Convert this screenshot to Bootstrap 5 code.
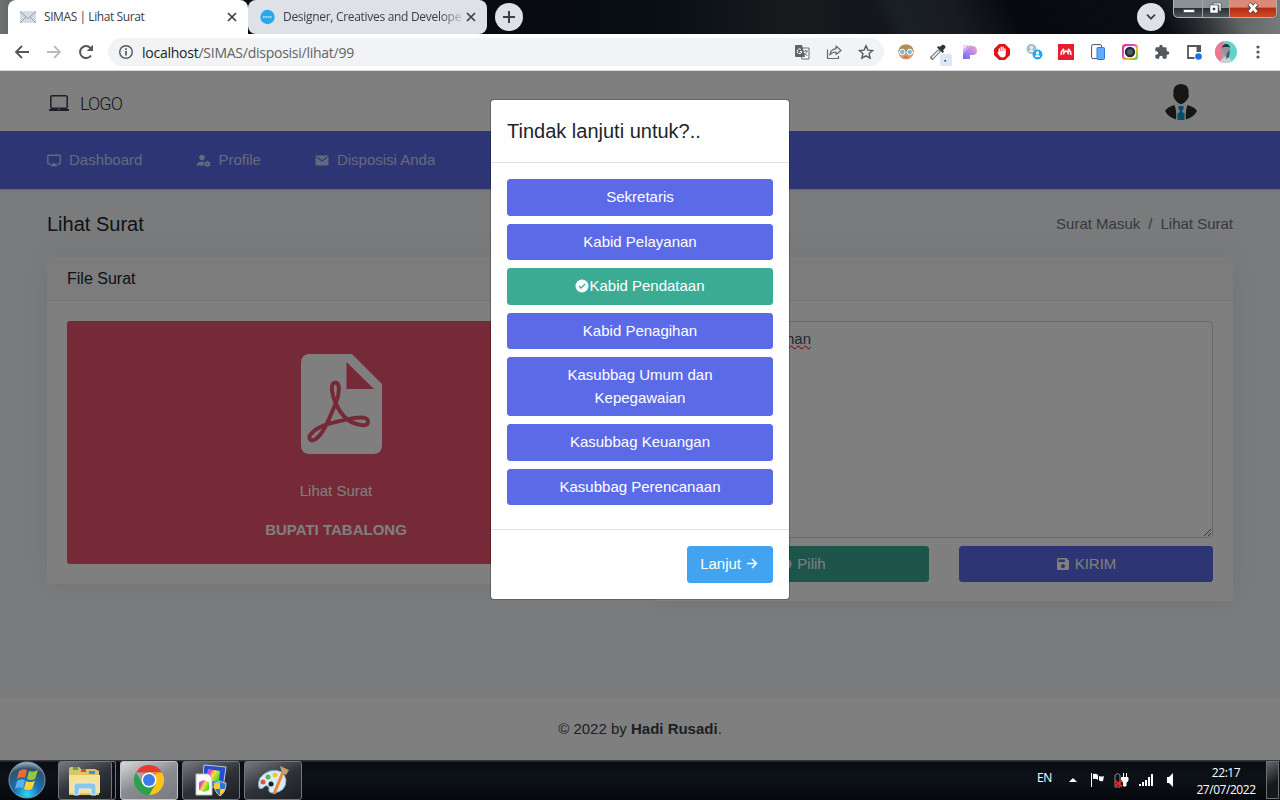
<!DOCTYPE html>
<html lang="id">
<head>
<meta charset="utf-8">
<meta name="viewport" content="width=device-width, initial-scale=1">
<title>SIMAS | Lihat Surat</title>
<link rel="stylesheet" href="https://cdn.jsdelivr.net/npm/bootstrap@5.3.0/dist/css/bootstrap.min.css">
<style>
  body{font-family:"Liberation Sans",Arial,sans-serif;font-size:15px;line-height:1.5;color:#212529;height:100vh;overflow:hidden}
  svg{display:block;flex:none}
  .ui{font-family:"Open Sans","Noto Sans",sans-serif}
  /* browser frame */
  .tabstrip{height:34px;background:linear-gradient(63deg,transparent 68%,#1a1f24 70%,#191d22 74%,#07090f 79%,#0a0e14 90%,transparent 96%),linear-gradient(90deg,#6d7170 0,#30363a 5%,#07090e 20%,#080d12 50%,#171b1e 62%,#080b12 85%,#4e5253 94%,#777a7b 100%);padding-left:8px}
  .btab{width:240px;height:34px;background:#fff;border-radius:8px 8px 0 0;padding:0 11px 0 12px;font-size:12px;color:#3c4043}
  .btab.other{width:239px;background:#dee1e6;border-radius:8px}
  .btab span{letter-spacing:-.42px;white-space:nowrap}
  .btab.other span{letter-spacing:-.3px;-webkit-mask-image:linear-gradient(90deg,#000 88%,rgba(0,0,0,.2) 100%);mask-image:linear-gradient(90deg,#000 88%,rgba(0,0,0,.2) 100%)}
  .round-btn{width:28px;height:28px;border-radius:50%;background:#dee1e6}
  .winctl{height:18px;border:1px solid #aeb2b4;border-top:0;border-radius:0 0 5px 5px;overflow:hidden;background:linear-gradient(#8b9195 45%,#282f34 50%,#4f575c)}
  .winctl div{height:17px;border-right:1px solid #a5a9ab}
  .winctl div:last-child{border:0;background:linear-gradient(#d98a78 40%,#b22d12 50%,#d04a28)}
  .toolbar{height:37px;background:#fff;border-bottom:1px solid #d6d9d8;padding-right:6px}
  .toolbar .cell{width:32px;display:flex;justify-content:center;align-items:center;flex:none}
  .omni{height:28px;border-radius:14px;background:#f1f3f4;width:776px;margin-right:6px;padding-left:10px;padding-right:2px;font-size:14px;color:#5f6368}
  .omni b{font-weight:400;color:#202124}
  /* application */
  .page{height:689px;background:#f3f6f9;overflow:hidden;position:relative}
  .topbar{height:60px;background:#fff;padding:0 83px 0 48px}
  .brandtext{font-family:Roboto,sans-serif;font-size:18px;font-weight:300;letter-spacing:-.9px;color:#2d3045;margin-left:10px}
  .mainnav{height:58px;background:#5b6be8;padding-left:47px;box-shadow:0 1px 1px rgba(0,0,0,.14)}
  .mainnav a{color:#cdd2f8;text-decoration:none;gap:7px}
  .content{padding:0 47px}
  .titlerow{height:68px}
  .titlerow h4{font-size:20px}
  .titlerow .breadcrumb{color:#6c757d;word-spacing:0}
  .panels{display:grid;grid-template-columns:1fr 1fr;gap:30px;align-items:start;height:441px}
  .panel{border:0;border-radius:3px;box-shadow:0 -3px 31px 0 rgba(0,0,0,.05),0 6px 20px 0 rgba(0,0,0,.02)}
  .panel .card-header{height:44px;background:#f9f9f9;border-bottom:1px solid #ededed;padding:0 20px;font-size:16px;display:flex;align-items:center}
  .panel .card-body{padding:20px}
  .pdfbox{height:243px;background:#ec536c;color:#fff;border-radius:3px;padding-top:33px}
  .note{height:217px;border-radius:4px;border-color:#ced4da;font-size:15px;color:#495057;resize:vertical;overflow:auto;padding:6px 12px}
  .note u{text-decoration:underline wavy #f00 1px;text-underline-offset:1px}
  .btn{font-size:15px;line-height:22.5px;border-radius:3px;padding:6px 12px;color:#fff}
  .btn:hover{color:#fff}
  .b-indigo{background:#5b6be8;border-color:#5b6be8}
  .b-green{background:#3cab94;border-color:#3cab94}
  .b-blue{background:#42a4f1;border-color:#42a4f1}
  .pagefoot{height:62px;background:#fff;color:#3a3f46}
  .shade{position:absolute;inset:0;background:rgba(0,0,0,.5);z-index:1040}
  .modal{position:absolute;--bs-modal-margin:28px}
  .modal-content{border-radius:4px;border-color:rgba(0,0,0,.2)}
  .modal-title{font-size:20px;line-height:30px}
  .modal-header,.modal-footer{border-color:#dee2e6}
  /* desktop taskbar */
  .taskbar{height:40px;background:linear-gradient(#32363e 0,#32363e 1px,#0a0d12 2px,#0d1219 50%,#05080b);padding-left:5px;color:#fff}
  .task{width:58px;height:39px;border:1px solid #73777c;border-radius:3px;background:linear-gradient(155deg,#777b7e,#30343a 50%,#1b1f24)}
  .task.active{background:linear-gradient(155deg,#d7d8d9,#8a8d90 50%,#777a7c);border-color:#c2c4c5}
  .stack{width:5px;height:39px;border:1px solid #73777c;border-left:0;border-radius:0 3px 3px 0;margin-left:-1px}
  .tray{font-size:12px;line-height:17px}
  .deskbtn{width:13px;height:38px;border:1px solid #6c7072;background:linear-gradient(150deg,#63676a,#15191c 60%)}
</style>
</head>
<body class="d-flex flex-column">

<div class="tabstrip ui d-flex align-items-center">
  <div class="btab d-flex align-items-center">
    <svg width="16" height="12" viewBox="0 0 16 12"><path d="M0 0h16v12H0z" fill="#d5dde4"/><path d="M0 12 6 6M16 12 10 6M0 .5l8 7 8-7" fill="none" stroke="#8c9aa6" stroke-width=".9"/></svg>
    <span class="ms-2 flex-grow-1">SIMAS | Lihat Surat</span>
    <svg width="10" height="10" viewBox="0 0 10 10" stroke="#3c4043" stroke-width="1.7"><path d="m1 1 8 8M9 1 1 9"/></svg>
  </div>
  <div class="btab other d-flex align-items-center">
    <svg width="15" height="16" viewBox="0 0 15 16"><circle cx="7.5" cy="8" r="7.2" fill="#29a9e8"/><path d="M3 8h9" stroke="#c2e8fa" stroke-width="1.6" stroke-dasharray="1.7 .6"/></svg>
    <span class="ms-2">Designer, Creatives and Develope</span>
    <svg class="ms-auto" width="10" height="10" viewBox="0 0 10 10" stroke="#3c4043" stroke-width="1.7"><path d="m1 1 8 8M9 1 1 9"/></svg>
  </div>
  <div class="round-btn ms-2 d-flex align-items-center justify-content-center"><svg width="12" height="12" stroke="#3c4043" stroke-width="2"><path d="M6 0v12M0 6h12"/></svg></div>
  <div class="round-btn ms-auto me-2 d-flex align-items-center justify-content-center"><svg width="10" height="6" fill="none" stroke="#3c4043" stroke-width="1.8"><path d="m1 .7 4 4 4-4"/></svg></div>
  <div class="winctl d-flex align-self-start" style="margin-right:3px">
    <div style="width:29px"><svg width="28" height="17"><path d="M9.500 9.500h11v3h-11z" fill="#fff" stroke="#454c51" stroke-width=".7"/></svg></div>
    <div style="width:27px"><svg width="26" height="17"><path d="M10 3h8v8h-2V5h-6z" fill="#fff" stroke="#454c51" stroke-width=".6"/><path fill-rule="evenodd" d="M7 5h8v8H7zm3 3v2h2V8z" fill="#fff" stroke="#454c51" stroke-width=".6"/></svg></div>
    <div style="width:46px"><svg width="46" height="17"><path d="m19 4 8 8m0-8-8 8" stroke="#5f3c38" stroke-width="4.600"/><path d="m19.500 4 7 8m0-8-7 8" stroke="#fff" stroke-width="2.800"/></svg></div>
  </div>
</div>

<div class="toolbar ui d-flex align-items-center">
  <div class="cell ms-1 me-0" style="width:36px"><svg width="16" height="14" fill="none" stroke="#54585d" stroke-width="1.800"><path d="M15 7H2M8 1 2 7l6 6"/></svg></div>
  <div class="cell" style="width:28px"><svg width="16" height="14" fill="none" stroke="#babcbe" stroke-width="1.800"><path d="M1 7h13M8 1l6 6-6 6"/></svg></div>
  <div class="cell" style="width:36px"><svg width="16" height="16" viewBox="0 0 16 16"><path d="M13 11.500A6 6 0 1 1 12.500 4" fill="none" stroke="#54585d" stroke-width="2"/><path d="M15 .8V7H8.800z" fill="#54585d"/></svg></div>
  <div class="omni d-flex align-items-center" style="margin-left:4px">
    <svg width="16" height="16" viewBox="0 0 16 16"><circle cx="8" cy="8" r="6.300" fill="none" stroke="#54585d" stroke-width="1.400"/><path d="M8 7v4.500M8 4.300v1.600" stroke="#54585d" stroke-width="1.700"/></svg>
    <span class="url" style="margin-left:8px;letter-spacing:-.25px"><b>localhost</b>/SIMAS/disposisi/lihat/99</span>
    <div class="cell ms-auto"><svg width="15" height="15" viewBox="0 0 15 15"><path d="M5 3h9v11H7l-1-3" fill="#fff" stroke="#666a6e"/><path d="M1 0h6l3 12H1q-1 0-1-1V1q0-1 1-1z" fill="#5f6368"/><path d="M6 4.500a2.300 2.300 0 1 0 .8 2H4.800" fill="none" stroke="#fff"/><path d="M8 6h5M10.500 5v1m1.500 0q-1 3-3 4.500m0-2.500q1 2 3.500 2.500" fill="none" stroke="#5f6368" stroke-width=".9"/></svg></div>
    <div class="cell"><svg width="16" height="16" viewBox="0 0 16 16" fill="none" stroke="#666a6e" stroke-width="1.200"><path d="M1.500 5.500v9h11v-2.500"/><path d="M10 2l5 4.500-5 4V8Q6 8 3.800 11 4.500 5.500 10 4.700z" stroke-linejoin="round"/></svg></div>
    <div class="cell"><svg width="16" height="16" viewBox="0 0 16 16"><path d="m8 1.800 1.900 4.300 4.700.4-3.500 3.100 1 4.600L8 11.800l-4.100 2.400 1-4.600-3.500-3.100 4.700-.4z" fill="none" stroke="#54585d" stroke-width="1.400"/></svg></div>
  </div>
  <div class="cell"><svg width="16" height="16" viewBox="0 0 16 16"><circle cx="8" cy="8" r="7.500" fill="#e0936b"/><path d="M.5 7Q1 .5 8 .5T15.500 7z" fill="#b18c5c"/><path d="M0 7h16" stroke="#7a6a58" stroke-width="1"/><circle cx="4.300" cy="8" r="2.800" fill="#70c4d4" stroke="#fff"/><circle cx="11.700" cy="8" r="2.800" fill="#70c4d4" stroke="#fff"/><path d="M6 13h4" stroke="#b06a4a"/></svg></div>
  <div class="cell position-relative"><svg width="16" height="16" viewBox="0 0 16 16"><path d="M1 15 9.500 6.500" stroke="#6c6c6c" stroke-width="3.800"/><path d="M2 14 9 7" stroke="#e8e8e8" stroke-width="1.800"/><path d="m7 3.500 5.500 5.500 1.500-1.500-1-1 2.500-3q0-3-3-2.800L9.500 3 8.500 2z" fill="#333"/></svg><div class="position-absolute" style="width:12px;height:12px;left:18px;top:10px;background:#dce7f7;border-radius:2px"><svg width="12" height="12"><path d="M4.500 6h1.500v1.500H4.500z" fill="#222"/></svg></div></div>
  <div class="cell"><svg width="14" height="15" viewBox="0 0 14 15"><defs><linearGradient id="pg" x1="1" x2="0" y2="1"><stop stop-color="#f8a3d2"/><stop offset="1" stop-color="#6868ff"/></linearGradient></defs><path d="M5 1h4q5 0 5 4.700T9 10H7v4H0V6z" fill="url(#pg)"/><path d="m0 2 2-2M0 5l5-5M0 8l8-8" stroke="#e6a9ef" stroke-width="1.100"/></svg></div>
  <div class="cell"><svg width="16" height="16" viewBox="0 0 16 16"><path d="M5 0h6l5 5v6l-5 5H5l-5-5V5z" fill="#df1313"/><path d="M5.300 8V5m1.900 3V3.200m1.900 4.800V3.200m1.900 4.800V5" stroke="#fff" stroke-width="1.400" stroke-linecap="round"/><path d="M4.600 7h7.100v3q0 3.500-3.500 3.500Q6 13.500 3.500 9z" fill="#fff"/></svg></div>
  <div class="cell"><svg width="17" height="16" viewBox="0 0 17 16"><circle cx="5.500" cy="5" r="5" fill="#a8bdca"/><circle cx="5.500" cy="3.500" r="1.700" fill="#e9eff2"/><path d="M2.500 8q1-2.500 3-2.500t3 2.500z" fill="#e9eff2"/><circle cx="11.500" cy="10.500" r="5" fill="#25a7f0"/><path d="M9 13q.5-2.700 2.500-2.700T14 13z" fill="#fff"/><circle cx="11.500" cy="8.800" r="1.500" fill="#fff"/></svg></div>
  <div class="cell"><svg width="16" height="16" viewBox="0 0 16 16"><path d="M0 0h16v16H0z" fill="#e91c2d"/><path d="M2.500 10.800q.8-.2.800-2 0-2 1.800-2 1.400 0 1.600 2M13.500 10.800q-.8-.2-.8-2 0-2-1.800-2-1.400 0-1.600 2M5.300 10.500q.8-3.500 2.700-3.500t2.700 3.500" fill="none" stroke="#fff" stroke-width="1.600"/><circle cx="5.300" cy="5.500" r="1.100" fill="#fff"/><circle cx="10.700" cy="5.500" r="1.100" fill="#fff"/></svg></div>
  <div class="cell"><svg width="14" height="16" viewBox="0 0 14 16"><rect x=".6" y=".6" width="10" height="14" rx="1.500" fill="#fff" stroke="#42526c"/><rect x="6" y="3.500" width="7.500" height="12" rx="1" fill="#62aaff" stroke="#3478cf"/></svg></div>
  <div class="cell"><svg width="16" height="16" viewBox="0 0 16 16"><defs><linearGradient id="rg" x2="1" y2="1"><stop stop-color="#f9316d"/><stop offset=".35" stop-color="#c54ae0"/><stop offset=".65" stop-color="#fac515"/><stop offset="1" stop-color="#33c47b"/></linearGradient></defs><rect width="16" height="16" rx="3.500" fill="url(#rg)"/><rect x="2" y="2" width="12" height="12" rx="3" fill="#fff"/><circle cx="8" cy="8" r="5.200" fill="#22282d"/><circle cx="8" cy="8" r="3" fill="#4b5d65"/></svg></div>
  <div class="cell"><svg width="16" height="16" viewBox="0 0 24 24"><path fill="#54585d" d="M20.500 11H19V7a2 2 0 0 0-2-2h-4V3.500a2.500 2.500 0 0 0-5 0V5H4a2 2 0 0 0-2 2v3.800h1.500a2.700 2.700 0 0 1 0 5.400H2V20a2 2 0 0 0 2 2h3.800v-1.500a2.700 2.700 0 0 1 5.400 0V22H17a2 2 0 0 0 2-2v-4h1.500a2.500 2.500 0 0 0 0-5z"/></svg></div>
  <div class="cell"><svg width="15" height="15" viewBox="0 0 15 15"><path d="M7.500 13H1V1h12v6" fill="none" stroke="#54585d" stroke-width="1.800"/><path d="M9.500 0h4.400v7H9.500z" fill="#54585d"/><circle cx="11.500" cy="11.500" r="3.300" fill="#1a73e8"/></svg></div>
  <div class="cell"><svg width="22" height="22" viewBox="0 0 22 22"><defs><clipPath id="av"><circle cx="11" cy="11" r="11"/></clipPath></defs><g clip-path="url(#av)"><path d="M0 0h22v22H0z" fill="#62d3c8"/><path d="M0 0h9q-5 10 2 22H0z" fill="#ee7690"/><path d="M5 22q1-6 6-6t6 6z" fill="#c9d2d6"/><ellipse cx="11" cy="9.500" rx="3.800" ry="5.500" fill="#9a9298"/><path d="M7 8q0-5 4-5t4 5l-1-2H8z" fill="#30343f"/><path d="m12 12 3-3-1 7-3 2z" fill="#4c555f"/></g></svg></div>
  <div class="cell"><svg width="4" height="14" fill="#54585d"><circle cx="2" cy="2" r="1.600"/><circle cx="2" cy="7" r="1.600"/><circle cx="2" cy="12" r="1.600"/></svg></div>
</div>

<div class="page">
  <header class="topbar d-flex align-items-center">
    <svg style="margin-top:3px" width="22" height="18" viewBox="0 0 22 18"><rect x="2.800" y="1.800" width="16.400" height="12.400" rx="1.300" fill="none" stroke="#3a3d52" stroke-width="1.500"/><path d="M1 15h20v1.200q0 .8-1 .8H2q-1 0-1-.8z" fill="#3a3d52"/><circle cx="11" cy="15.300" r=".7" fill="#fff"/></svg>
    <span class="brandtext" style="padding-top:4px">LOGO</span>
    <svg class="ms-auto" width="32" height="36" viewBox="0 0 32 36" style="margin-top:2px"><path d="M8.500 10Q7.500 0 16 0t7.500 10l.5 2-1.300 3Q19 20 16 20t-6.500-5L8.200 12z" fill="#2d2d2d"/><path d="M9.500 21Q2 23 0 27q3 6 11 8.500Q12 28 9.500 21zM22.500 21Q30 23 32 27q-3 6-11 8.500Q20 28 22.500 21z" fill="#2d2d2d"/><path d="M14 22h4l1 2-2 3h-2l-2-3z" fill="#009fe3"/><path d="M12.500 30 16 26l3.500 4v6h-7z" fill="#009fe3"/></svg>
  </header>
  <nav class="mainnav d-flex align-items-center">
    <a class="d-flex align-items-center" href="#"><svg width="15" height="15" viewBox="0 0 15 15"><path d="M4 11H1.700q-.9 0-.9-.9V3q0-.8.8-.8h10.900q.8 0 .8.800v7.100q0 .9-.9.900H10" fill="none" stroke="currentColor" stroke-width="1.400"/><path d="m3 13.300 4-3.700 4 3.700z" fill="currentColor"/></svg>Dashboard</a>
    <a class="d-flex align-items-center" href="#" style="margin-left:54px"><svg width="15" height="15" viewBox="0 0 15 15" fill="currentColor"><circle cx="6" cy="4.500" r="2.800"/><path d="M.5 12.500q0-3.500 5.500-3.800 1.500 0 2.500.3-.8 1.800 0 3.500z"/><path d="m11.500 7.300.6 1.200 1.300-.2.600 1-.8 1.100.8 1.100-.6 1-1.300-.1-.6 1.200h-1l-.6-1.200-1.300.1-.6-1 .8-1.100-.8-1.100.6-1 1.300.2.600-1.200z" transform="translate(.5 .5)"/><circle cx="11.400" cy="11" r=".8" fill="#5b6be8"/></svg>Profile</a>
    <a class="d-flex align-items-center" href="#" style="margin-left:54px;gap:8px"><svg width="14" height="15" viewBox="0 0 14 15"><path d="M.5 2.500h13L12 4.300h1.500v7.200q0 1-1 1H1.500q-1 0-1-1V4.300H2z" fill="currentColor"/><path d="m2.200 4.200 4.800 3.800 4.800-3.800" stroke="#5b6be8" stroke-width="1.300" fill="none"/><path d="M3 3.500h8L7 6.500z" fill="currentColor"/></svg>Disposisi Anda</a>
  </nav>
  <main class="content">
    <div class="titlerow d-flex align-items-center justify-content-between">
      <h4 class="fw-normal mb-0" style="margin-top:2px">Lihat Surat</h4>
      <div class="breadcrumb mb-0 gap-2" style="margin-top:2px"><span>Surat Masuk</span><span>/</span><span>Lihat Surat</span></div>
    </div>
    <div class="panels">
      <section class="card panel">
        <div class="card-header">File Surat</div>
        <div class="card-body">
          <div class="pdfbox text-center">
            <svg style="margin-left:234px" width="81" height="100" viewBox="0 0 81 100"><path fill-rule="evenodd" d="M9 0h42l30 30v61q0 9-9 9H9Q0 100 0 91V9Q0 0 9 0zm36.500 8v27H73z" fill="#fff"/><path d="M34.500 28.500C28.500 29 31 41 34.500 49 39 59 46 67 54 69.500 62 72 67 72 67 67.500 67 62 56 63 46 65.500 34 68 18 71 11 79 6 84 9 88 14 85.500 23 80 29 62 34.500 50 39 40 39 28 34.500 28.500z" fill="none" stroke="#ec536c" stroke-width="4"/></svg>
            <div style="margin-top:26px">Lihat Surat</div>
            <div class="fw-bold" style="margin-top:16px">BUPATI TABALONG</div>
          </div>
        </div>
      </section>
      <section class="card panel">
        <div class="card-header"></div>
        <div class="card-body" style="padding-bottom:19px">
          <div class="form-control note" style="padding-left:110px"><u>han</u></div>
          <div class="mt-2" style="display:grid;grid-template-columns:1fr 1fr;gap:30px">
            <button class="btn b-green d-flex justify-content-center align-items-center" style="gap:5px;padding-bottom:5px"><svg width="14" height="14" viewBox="0 0 14 14"><circle cx="7" cy="7" r="6.500" fill="#fff"/><path d="m4 7 2 2 4-4" stroke="#3cab94" stroke-width="1.300" fill="none"/></svg>Pilih</button>
            <button class="btn b-indigo d-flex justify-content-center align-items-center" style="gap:5px;padding-bottom:5px"><svg width="14" height="14" viewBox="0 0 14 14"><path fill-rule="evenodd" d="M2 1h8.500L13 3.500V12q0 1-1 1H2q-1 0-1-1V2q0-1 1-1zm.5 1.500V5H9V2.500zM7 7.200a2 2 0 1 0 .01 0z" fill="#fff"/></svg>KIRIM</button>
          </div>
        </div>
      </section>
    </div>
  </main>
  <footer class="pagefoot d-flex align-items-center justify-content-center"><span>© 2022 by <strong>Hadi Rusadi</strong>.</span></footer>

  <div class="shade"></div>
  <div class="modal d-block">
    <div class="modal-dialog modal-sm">
      <div class="modal-content">
        <div class="modal-header"><h5 class="modal-title fw-normal">Tindak lanjuti untuk?..</h5></div>
        <div class="modal-body">
          <button class="btn b-indigo w-100 d-block mb-2">Sekretaris</button>
          <button class="btn b-indigo w-100 d-block mb-2">Kabid Pelayanan</button>
          <button class="btn b-green w-100 d-flex justify-content-center align-items-center mb-2"><svg width="14" height="14" viewBox="0 0 14 14"><circle cx="7" cy="7" r="6.500" fill="#fff"/><path d="m4 7 2 2 4-4" stroke="#3cab94" stroke-width="1.300" fill="none"/></svg>Kabid Pendataan</button>
          <button class="btn b-indigo w-100 d-block mb-2">Kabid Penagihan</button>
          <button class="btn b-indigo w-100 d-block mb-2">Kasubbag Umum dan<br>Kepegawaian</button>
          <button class="btn b-indigo w-100 d-block mb-2">Kasubbag Keuangan</button>
          <button class="btn b-indigo w-100 d-block mb-2">Kasubbag Perencanaan</button>
        </div>
        <div class="modal-footer">
          <button class="btn b-blue d-flex align-items-center" style="gap:4px">Lanjut<svg width="15" height="14" viewBox="0 0 15 14" fill="none" stroke="#fff" stroke-width="1.500"><path d="M2 6.500h9.500M7 2l4.500 4.500L7 11"/></svg></button>
        </div>
      </div>
    </div>
  </div>
</div>

<div class="taskbar ui d-flex align-items-center">
  <svg width="44" height="40" viewBox="0 0 44 40"><defs><radialGradient id="orb" cx=".5" cy=".9" r=".9"><stop stop-color="#35d6fa"/><stop offset=".4" stop-color="#1a6fae"/><stop offset=".8" stop-color="#32506c"/><stop offset="1" stop-color="#a9bdca"/></radialGradient></defs><circle cx="22" cy="20" r="18" fill="url(#orb)" stroke="#779bb0"/><path d="M14 11q4-3 8-1l-2 8q-4-2-8 1z" fill="#ef6a33"/><path d="M24 11q4 2 9-1l-3 9q-4 2-8 0z" fill="#96c940"/><path d="M12 21q4-3 8-1l-2 8q-4-2-8 1z" fill="#5bb1ea"/><path d="M21 21q4 2 9 0l-3 8q-4 2-8 0z" fill="#fcd03b"/></svg>
  <div class="task d-flex align-items-center justify-content-center" style="margin-left:9px;width:54px"><svg width="34" height="32" viewBox="0 0 34 32"><path d="M1 5q0-2 2-2h8l2 2h14l4 2v24H1z" fill="#dcc46c"/><path d="M5 3h5v3H5z" fill="#3db54a"/><path d="M13 5h5v3h-5z" fill="#df4a32"/><path d="M21 7h6v3h-6z" fill="#3695e0"/><path d="M1 11h31v18H1z" fill="#f6e294"/><path d="M6 31v-9q0-3 3-3h16q3 0 3 3v9h-5v-6H11v6z" fill="#8ac7e8" stroke="#d4f0fb"/></svg></div>
  <div class="stack"></div>
  <div class="task active d-flex align-items-center justify-content-center" style="margin-left:4px"><svg width="30" height="30" viewBox="0 0 30 30"><path d="M2 7.500A15 15 0 0 1 28 7.500H15z" fill="#e43c2f"/><path d="M28 7.500A15 15 0 0 1 15 30l6.500-11.200L21 9z" fill="#fbc418"/><path d="M2 7.500A15 15 0 0 0 15 30l6.500-11.200L15 22 8.500 18.700z" fill="#2ca04c"/><path d="M15 7.500h13" stroke="#fbc418" stroke-width=".5"/><circle cx="15" cy="15" r="7.500" fill="#fff"/><circle cx="15" cy="15" r="6" fill="#3b7de8"/></svg></div>
  <div class="task d-flex align-items-center justify-content-center" style="margin-left:4px"><svg width="34" height="32" viewBox="0 0 34 32"><defs><linearGradient id="cg" x2="1" y2=".6"><stop stop-color="#28c8f1"/><stop offset=".3" stop-color="#f335d6"/><stop offset=".55" stop-color="#f6e42c"/><stop offset="1" stop-color="#3cd93b"/></linearGradient></defs><path d="m10 1 22 2-3 21-21-2z" fill="#234ecf" stroke="#bfc8da"/><path d="m14 5 12 2-1 11-13-1z" fill="url(#cg)"/><path d="M2 10h12l4 4v17H2z" fill="#fff" stroke="#bbb"/><path d="m5 18 5-2 5 2v8l-5 2-5-2z" fill="url(#cg)"/><path d="M20 19q4 0 6-2 2 2 6 2 0 9-6 13-6-4-6-13z" fill="#2878cd" stroke="#ccd"/><path d="M26 18v7h-6q0-3 .5-5.500Q24 19 26 18zM26 25h5q-1 4-5 6z" fill="#f6cf32"/></svg></div>
  <div class="task d-flex align-items-center justify-content-center" style="margin-left:4px"><svg width="34" height="32" viewBox="0 0 34 32"><path d="M3 24Q0 12 14 7q14-3 16 9 0 12-13 13-5 0-4-4 0-4-4-3-3 4-6 2z" fill="#d6ecf8" stroke="#81b0cf"/><circle cx="7" cy="18" r="2.500" fill="#e44f45"/><circle cx="12" cy="13" r="2.500" fill="#59b748"/><circle cx="19" cy="11" r="2.500" fill="#f5c72d"/><circle cx="15" cy="20" r="2.500" fill="#15202b"/><path d="m27 8-9 22" stroke="#ed8931" stroke-width="3"/><path d="m26 9-2-7 9 4-3 5z" fill="#c5a071"/></svg></div>
  <div class="tray ms-auto d-flex align-items-center">
    <span style="margin-bottom:5px;letter-spacing:-.3px">EN</span>
    <svg style="margin-left:17px" width="8" height="4"><path d="m0 4 4-4 4 4z" fill="#fff"/></svg>
    <svg style="margin-left:13px" width="15" height="14" fill="#fff"><path d="M1 0h1v14H1zM3 1q3-1 5 1v5Q6 5 3 6zM9 3q3 1 5 0l-1 5q-3 1-4-1z"/></svg>
    <svg style="margin-left:9px" width="15" height="15" viewBox="0 0 15 15"><path d="M1 2q3-3 5 0v12H1z" fill="none" stroke="#888"/><path d="M9.500 0v4m3-4v4M7.500 4.500H14V7q0 2-2 2.300V13H9.500V9.300Q7.500 9 7.500 7z" fill="#fff" stroke="#fff"/><path d="m1 7.500 7 6m0-6-7 6" stroke="#f32020" stroke-width="2"/></svg>
    <svg style="margin-left:10px" width="15" height="12" fill="#fff"><path d="M0 10h2v2H0zM3 8h2v4H3zM6 6h2v6H6zM9 3h2v9H9zM12 0h2v12h-2z"/></svg>
    <svg style="margin-left:13px" width="8" height="14"><path d="M0 4h2l4-4v14l-4-4H0z" fill="#fff"/></svg>
    <div class="text-center" style="margin-left:21px;width:60px;letter-spacing:-.45px;white-space:nowrap;padding-top:2px">22:17<br>27/07/2022</div>
    <div class="deskbtn" style="margin-left:10px;margin-right:1px"></div>
  </div>
</div>
<script src="https://cdn.jsdelivr.net/npm/bootstrap@5.3.0/dist/js/bootstrap.bundle.min.js"></script>
</body>
</html>
